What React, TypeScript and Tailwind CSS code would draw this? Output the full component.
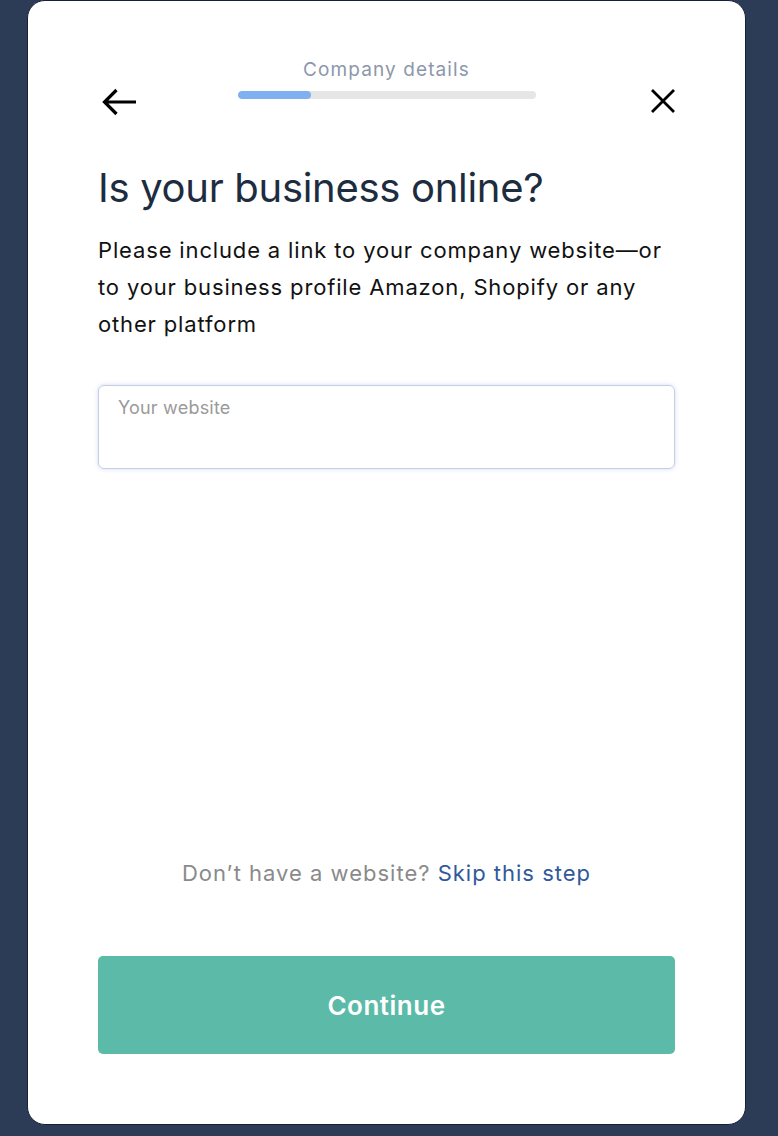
import React, { useState } from "react";

const BackArrow = () => (
  <svg width="36" height="28" viewBox="0 0 36 28" fill="none">
    <path
      d="M35 14H3.5M15.5 2L3.5 14L15.5 26"
      stroke="#000"
      strokeWidth="3.2"
    />
  </svg>
);

const CloseIcon = () => (
  <svg width="26" height="26" viewBox="0 0 26 26" fill="none">
    <path d="M2 2L24 24M24 2L2 24" stroke="#000" strokeWidth="2.8" />
  </svg>
);

const App: React.FC = () => {
  const [website, setWebsite] = useState("");

  return (
    <div
      className="min-h-[1136px] bg-[#2c3c57] pl-[27px]"
      style={{ fontFamily: "Inter, 'Noto Sans', sans-serif" }}
    >
      <div className="flex h-[1125px] w-[719px] flex-col rounded-[18px] border border-[#16203a] bg-white px-[70px] pb-[70px]">
        {/* header */}
        <div className="grid grid-cols-[1fr_auto_1fr] items-start pt-[56px]">
          <button type="button" className="ml-[3px] mt-[31px] justify-self-start">
            <BackArrow />
          </button>
          <div className="flex flex-col items-center">
            <span className="text-[19px] leading-[26px] tracking-[1.1px] text-[#8d97ab]">
              Company details
            </span>
            <div className="mt-[8px] h-[8px] w-[298px] overflow-hidden rounded-full bg-[#e6e6e6]">
              <div className="h-full w-[73px] rounded-full bg-[#7fb1f0]" />
            </div>
          </div>
          <button type="button" className="-mr-[1px] mt-[31px] justify-self-end">
            <CloseIcon />
          </button>
        </div>

        <h1 className="mt-[48px] text-[40px] font-normal leading-[48px] tracking-[-0.3px] text-[#1e2c40]">
          Is your business online?
        </h1>
        <p className="mt-[20px] text-[22px] leading-[37px] tracking-[0.85px] text-[#111]">
          Please include a link to your company website—or to your business
          profile Amazon, Shopify or any other platform
        </p>

        <div className="mt-[42px] flex h-[84px] flex-col rounded-[6px] border border-[#c7cde3] px-[19px] pt-[10px] shadow-[0_0_4px_rgba(120,150,230,0.35)]">
          <label className="text-[18px] leading-[24px] tracking-[0.2px] text-[#9a9a9a]">
            Your website
          </label>
          <input
            value={website}
            onChange={(e) => setWebsite(e.target.value)}
            className="mt-[4px] bg-transparent text-[18px] text-[#111] outline-none"
          />
        </div>

        <div className="mt-auto flex flex-col">
          <p className="text-center text-[22px] leading-[30px] tracking-[1px] text-[#8a8a8a]">
            Don’t have a website?{" "}
            <a href="#" className="text-[#30599a]">
              Skip this step
            </a>
          </p>
          <button
            type="button"
            className="mt-[68px] h-[98px] w-full rounded-[5px] bg-[#5bbaa8] text-[26px] font-semibold tracking-[0.5px] text-white"
          >
            Continue
          </button>
        </div>
      </div>
    </div>
  );
};

export default App;
